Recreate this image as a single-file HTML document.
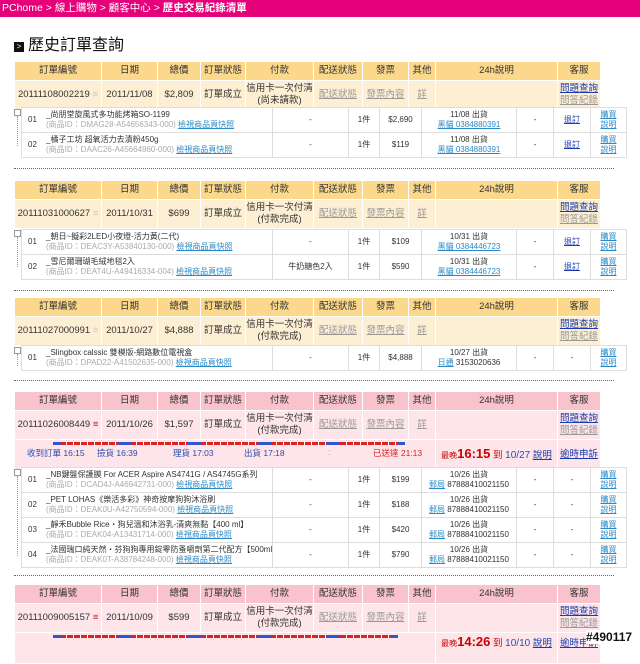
<!DOCTYPE html>
<html><head><meta charset="utf-8"><style>
*{margin:0;padding:0;box-sizing:border-box}
body{width:640px;height:645px;overflow:hidden;background:#fff;font-family:"Liberation Sans","Noto Sans CJK TC",sans-serif;font-size:9px;color:#333;position:relative}
.top{position:absolute;left:0;top:0;width:640px;height:17px;background:#e6007a;color:#fff;font-size:10.5px;line-height:17px;padding-left:2px}
.top b{font-weight:bold}
h1{position:absolute;left:14px;top:36px;font-size:16px;font-weight:normal;color:#111;line-height:20px}
h1 i{display:inline-block;width:10px;height:10px;background:#111;margin-right:4px;vertical-align:1px;color:#fff;font-size:8px;line-height:10px;text-align:center;font-style:normal}
table{border-collapse:collapse;table-layout:fixed;position:absolute}
.o{left:14px;width:586px}
.o td{border:1px solid #fff;text-align:center;font-size:9.5px;color:#333;line-height:12px;padding:0;white-space:nowrap;overflow:hidden}
.y .h td{background:#fbd88c;height:19px}
.y .d td{background:#fdefd3;height:29px}
.p .h td{background:#f8c3cc;height:19px}
.p .d td{background:#fde5e9;height:29px}
.p .g td{background:#fde5e9;height:31px}
.o td.gray,.gray{color:#999;text-decoration:underline}
.o td.blue,.blue{color:#1a3cb0;text-decoration:underline}
.lb,.it td.lb{color:#2a8ac8;text-decoration:underline}
.it{left:21px;width:605px;border:1px solid #ccc}
.it td{border:1px solid #ddd;background:#fff;text-align:center;height:25px;font-size:8px;line-height:10px;padding:0;white-space:nowrap;overflow:hidden}
.it td.n{text-align:left;padding-left:6px}
.it td.n span.no{display:inline-block;width:18px;vertical-align:top;padding-top:5px}
.nm{display:inline-block;vertical-align:top}
.id{color:#aaa}
.it td.blue{color:#1a3cb0}
.sep{position:absolute;left:14px;width:600px;border-top:1px dotted #666}
.tree{position:absolute;left:14px;width:7px;height:7px;border:1px solid #999;background:#fff}
.tl{position:absolute;left:17px;border-left:1px dotted #999}
.bar{position:absolute;left:53px;width:352px;height:3px;background:repeating-linear-gradient(90deg,#d22 0 6px,#fff 6px 7px)}
.bb{position:absolute;height:3px;background:#3355cc;width:14px}
.tm{position:absolute;font-size:8.5px;color:#2a4db0}
</style></head><body>
<div class="top">PChome &gt; 線上購物 &gt; 顧客中心 &gt; <b>歷史交易紀錄清單</b></div>
<h1><i>&gt;</i>歷史訂單查詢</h1>

<!-- order 1 -->
<table class="o y" style="top:61px"><colgroup><col width="87"><col width="56"><col width="43"><col width="45"><col width="68"><col width="49"><col width="46"><col width="27"><col width="122"><col width="43"></colgroup>
<tr class="h"><td>訂單編號</td><td>日期</td><td>總價</td><td>訂單狀態</td><td>付款</td><td>配送狀態</td><td>發票</td><td>其他</td><td>24h說明</td><td>客服</td></tr>
<tr class="d"><td>20111108002219 <span style="color:#ccc">≡</span></td><td>2011/11/08</td><td>$2,809</td><td>訂單成立</td><td>信用卡一次付清<br>(尚未請款)</td><td class="gray">配送狀態</td><td class="gray">發票內容</td><td class="gray">詳</td><td></td><td><span class="blue">問題查詢</span><br><span class="gray">問答紀錄</span></td></tr></table>
<div class="tree" style="top:109px"></div><div class="tl" style="top:116px;height:30px"></div>
<table class="it" style="top:107px"><colgroup><col width="251"><col width="76"><col width="31"><col width="42"><col width="95"><col width="37"><col width="37"><col width="36"></colgroup>
<tr><td class="n"><span class="no">01</span><span class="nm">_尚朋堂旋風式多功能烤箱SO-1199<br><span class="id">(商品ID：DMAG28-A54656343-000)</span> <span class="lb">檢視商品頁快照</span></span></td><td>-</td><td>1件</td><td>$2,690</td><td>11/08 出貨<br><span class="lb">黑貓 0384880391</span></td><td>-</td><td class="blue">退訂</td><td class="lb">購買<br>說明</td></tr>
<tr><td class="n"><span class="no">02</span><span class="nm">_橘子工坊 超氧活力去漬粉450g<br><span class="id">(商品ID：DAAC26-A45664960-000)</span> <span class="lb">檢視商品頁快照</span></span></td><td>-</td><td>1件</td><td>$119</td><td>11/08 出貨<br><span class="lb">黑貓 0384880391</span></td><td>-</td><td class="blue">退訂</td><td class="lb">購買<br>說明</td></tr></table>
<div class="sep" style="top:168px"></div>

<!-- order 2 -->
<table class="o y" style="top:180px"><colgroup><col width="87"><col width="56"><col width="43"><col width="45"><col width="68"><col width="49"><col width="46"><col width="27"><col width="122"><col width="43"></colgroup>
<tr class="h"><td>訂單編號</td><td>日期</td><td>總價</td><td>訂單狀態</td><td>付款</td><td>配送狀態</td><td>發票</td><td>其他</td><td>24h說明</td><td>客服</td></tr>
<tr class="d"><td>20111031000627 <span style="color:#ccc">≡</span></td><td>2011/10/31</td><td>$699</td><td>訂單成立</td><td>信用卡一次付清<br>(付款完成)</td><td class="gray">配送狀態</td><td class="gray">發票內容</td><td class="gray">詳</td><td></td><td><span class="blue">問題查詢</span><br><span class="gray">問答紀錄</span></td></tr></table>
<div class="tree" style="top:230px"></div><div class="tl" style="top:237px;height:30px"></div>
<table class="it" style="top:229px"><colgroup><col width="251"><col width="76"><col width="31"><col width="42"><col width="95"><col width="37"><col width="37"><col width="36"></colgroup>
<tr><td class="n"><span class="no">01</span><span class="nm">_朝日~擬彩2LED小夜燈-活力黃(二代)<br><span class="id">(商品ID：DEAC3Y-A53840130-000)</span> <span class="lb">檢視商品頁快照</span></span></td><td>-</td><td>1件</td><td>$109</td><td>10/31 出貨<br><span class="lb">黑貓 0384446723</span></td><td>-</td><td class="blue">退訂</td><td class="lb">購買<br>說明</td></tr>
<tr><td class="n"><span class="no">02</span><span class="nm">_雪尼爾珊瑚毛絨地毯2入<br><span class="id">(商品ID：DEAT4U-A49416334-004)</span> <span class="lb">檢視商品頁快照</span></span></td><td>牛奶糖色2入</td><td>1件</td><td>$590</td><td>10/31 出貨<br><span class="lb">黑貓 0384446723</span></td><td>-</td><td class="blue">退訂</td><td class="lb">購買<br>說明</td></tr></table>
<div class="sep" style="top:290px"></div>

<!-- order 3 -->
<table class="o y" style="top:297px"><colgroup><col width="87"><col width="56"><col width="43"><col width="45"><col width="68"><col width="49"><col width="46"><col width="27"><col width="122"><col width="43"></colgroup>
<tr class="h"><td>訂單編號</td><td>日期</td><td>總價</td><td>訂單狀態</td><td>付款</td><td>配送狀態</td><td>發票</td><td>其他</td><td>24h說明</td><td>客服</td></tr>
<tr class="d"><td>20111027000991 <span style="color:#ccc">≡</span></td><td>2011/10/27</td><td>$4,888</td><td>訂單成立</td><td>信用卡一次付清<br>(付款完成)</td><td class="gray">配送狀態</td><td class="gray">發票內容</td><td class="gray">詳</td><td></td><td><span class="blue">問題查詢</span><br><span class="gray">問答紀錄</span></td></tr></table>
<div class="tree" style="top:347px"></div><div class="tl" style="top:354px;height:12px"></div>
<table class="it" style="top:345px"><colgroup><col width="251"><col width="76"><col width="31"><col width="42"><col width="95"><col width="37"><col width="37"><col width="36"></colgroup>
<tr><td class="n"><span class="no">01</span><span class="nm">_Slingbox calssic 雙模版-網路數位電視盒<br><span class="id">(商品ID：DPAD22-A41502635-000)</span> <span class="lb">檢視商品頁快照</span></span></td><td>-</td><td>1件</td><td>$4,888</td><td>10/27 出貨<br><span class="lb">日通</span> 3153020636</td><td>-</td><td>-</td><td class="lb">購買<br>說明</td></tr></table>
<div class="sep" style="top:380px"></div>

<!-- order 4 -->
<table class="o p" style="top:391px"><colgroup><col width="87"><col width="56"><col width="43"><col width="45"><col width="68"><col width="49"><col width="46"><col width="27"><col width="122"><col width="43"></colgroup>
<tr class="h"><td>訂單編號</td><td>日期</td><td>總價</td><td>訂單狀態</td><td>付款</td><td>配送狀態</td><td>發票</td><td>其他</td><td>24h說明</td><td>客服</td></tr>
<tr class="d"><td>20111026008449 <span style="color:#d22">≡</span></td><td>2011/10/26</td><td>$1,597</td><td>訂單成立</td><td>信用卡一次付清<br>(付款完成)</td><td class="gray">配送狀態</td><td class="gray">發票內容</td><td class="gray">詳</td><td></td><td><span class="blue">問題查詢</span><br><span class="gray">問答紀錄</span></td></tr>
<tr class="g"><td colspan="8"></td><td><span style="color:#c00;font-size:8px">最晚</span><b style="color:#c00;font-size:13px">16:15</b> <span style="color:#c00">到</span> <span style="color:#2a4db0;font-size:10px">10/27</span> <span class="blue">說明</span></td><td class="blue">逾時申訴</td></tr></table>
<div class="bar" style="top:442px"></div>
<div class="bb" style="top:442px;left:53px;width:8px"></div><div class="bb" style="top:442px;left:117px"></div><div class="bb" style="top:442px;left:188px"></div><div class="bb" style="top:442px;left:258px"></div><div class="bb" style="top:442px;left:326px"></div><div class="bb" style="top:442px;left:398px;width:7px"></div>
<div class="tm" style="top:447px;left:27px">收到訂單 16:15</div><div class="tm" style="top:447px;left:97px">撿貨 16:39</div><div class="tm" style="top:447px;left:173px">理貨 17:03</div><div class="tm" style="top:447px;left:244px">出貨 17:18</div><div class="tm" style="top:447px;left:328px;color:#999">:</div><div class="tm" style="top:447px;left:373px;color:#d22">已送達 21:13</div>
<div class="tree" style="top:469px"></div><div class="tl" style="top:476px;height:80px"></div>
<table class="it" style="top:467px"><colgroup><col width="251"><col width="76"><col width="31"><col width="42"><col width="95"><col width="37"><col width="37"><col width="36"></colgroup>
<tr><td class="n"><span class="no">01</span><span class="nm">_NB鍵盤保護膜 For ACER Aspire AS4741G / AS4745G系列<br><span class="id">(商品ID：DCAD4J-A46942731-000)</span> <span class="lb">檢視商品頁快照</span></span></td><td>-</td><td>1件</td><td>$199</td><td>10/26 出貨<br><span class="lb">郵局</span> 87888410021150</td><td>-</td><td>-</td><td class="lb">購買<br>說明</td></tr>
<tr><td class="n"><span class="no">02</span><span class="nm">_PET LOHAS《樂活多彩》神奇按摩狗狗沐浴刷<br><span class="id">(商品ID：DEAK0U-A42750594-000)</span> <span class="lb">檢視商品頁快照</span></span></td><td>-</td><td>1件</td><td>$188</td><td>10/26 出貨<br><span class="lb">郵局</span> 87888410021150</td><td>-</td><td>-</td><td class="lb">購買<br>說明</td></tr>
<tr><td class="n"><span class="no">03</span><span class="nm">_靜禾Bubble Rice‧狗兒溫和沐浴乳-清爽無黏【400 ml】<br><span class="id">(商品ID：DEAK04-A13431714-000)</span> <span class="lb">檢視商品頁快照</span></span></td><td>-</td><td>1件</td><td>$420</td><td>10/26 出貨<br><span class="lb">郵局</span> 87888410021150</td><td>-</td><td>-</td><td class="lb">購買<br>說明</td></tr>
<tr><td class="n"><span class="no">04</span><span class="nm">_法國瑞口純天然‧芬狗狗專用錠零防蚤嚼劑第二代配方【500ml】<br><span class="id">(商品ID：DEAK0T-A38784248-000)</span> <span class="lb">檢視商品頁快照</span></span></td><td>-</td><td>1件</td><td>$790</td><td>10/26 出貨<br><span class="lb">郵局</span> 87888410021150</td><td>-</td><td>-</td><td class="lb">購買<br>說明</td></tr></table>
<div class="sep" style="top:575px"></div>

<!-- order 5 -->
<table class="o p" style="top:584px"><colgroup><col width="87"><col width="56"><col width="43"><col width="45"><col width="68"><col width="49"><col width="46"><col width="27"><col width="122"><col width="43"></colgroup>
<tr class="h"><td>訂單編號</td><td>日期</td><td>總價</td><td>訂單狀態</td><td>付款</td><td>配送狀態</td><td>發票</td><td>其他</td><td>24h說明</td><td>客服</td></tr>
<tr class="d"><td>20111009005157 <span style="color:#d22">≡</span></td><td>2011/10/09</td><td>$599</td><td>訂單成立</td><td>信用卡一次付清<br>(付款完成)</td><td class="gray">配送狀態</td><td class="gray">發票內容</td><td class="gray">詳</td><td></td><td><span class="blue">問題查詢</span><br><span class="gray">問答紀錄</span></td></tr>
<tr class="g"><td colspan="8"></td><td style="vertical-align:top;padding-top:3px"><span style="color:#c00;font-size:8px">最晚</span><b style="color:#c00;font-size:13px">14:26</b> <span style="color:#c00">到</span> <span style="color:#2a4db0;font-size:10px">10/10</span> <span class="blue">說明</span></td><td class="blue" style="vertical-align:top;padding-top:5px">逾時申訴</td></tr></table>
<div class="bar" style="top:635px;width:345px"></div>
<div class="bb" style="top:635px;left:53px;width:8px"></div><div class="bb" style="top:635px;left:117px"></div><div class="bb" style="top:635px;left:188px"></div><div class="bb" style="top:635px;left:258px"></div><div class="bb" style="top:635px;left:326px"></div><div class="bb" style="top:635px;left:392px;width:6px"></div>
<div style="position:absolute;left:586px;top:630px;font-size:12px;font-weight:bold;color:#111;background:#fff">#490117</div>
</body></html>
